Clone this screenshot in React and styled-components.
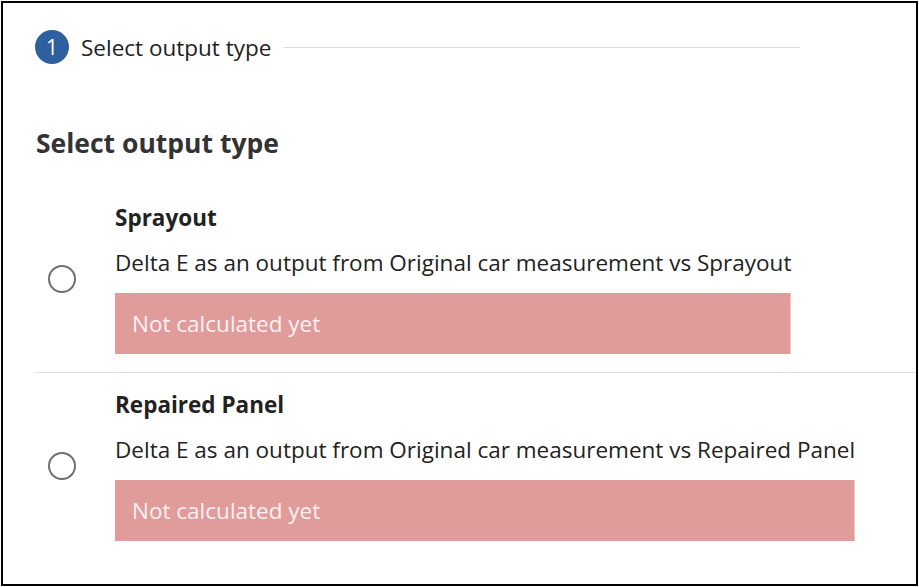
import React, { useState } from "react";
import styled, { createGlobalStyle } from "styled-components";

const GlobalStyle = createGlobalStyle`
  html, body {
    margin: 0;
    padding: 0;
    background: #ffffff;
  }
  body {
    font-family: "Open Sans", "Liberation Sans", sans-serif;
    color: #222222;
  }
`;

const Frame = styled.div`
  box-sizing: border-box;
  margin: 1px;
  height: 585px;
  border: 2px solid #000000;
  padding-left: 32px;
  overflow: hidden;
`;

const StepHeader = styled.div`
  display: flex;
  align-items: center;
  width: 765px;
  height: 34px;
  margin-top: 27px;
`;

const StepNumber = styled.div`
  width: 34px;
  height: 34px;
  border-radius: 50%;
  background: #2e5f9f;
  color: #ffffff;
  font-size: 21px;
  display: flex;
  align-items: center;
  justify-content: center;
  flex-shrink: 0;
`;

const StepLabel = styled.span`
  margin-left: 12px;
  font-size: 22.5px;
  color: #222222;
  white-space: nowrap;
`;

const StepLine = styled.div`
  flex: 1;
  height: 1px;
  margin-left: 12px;
  background: #e0e0e0;
`;

const Heading = styled.h2`
  margin: 63px 0 0 1px;
  font-size: 26.5px;
  line-height: 32px;
  font-weight: 700;
  color: #333333;
`;

const OptionList = styled.div`
  margin-top: 27px;
`;

const OptionRow = styled.label`
  display: flex;
  align-items: center;
  padding: 18px 0;
  border-bottom: ${(p) => (p.$last ? "none" : "1px solid #e3e3e3")};
  cursor: pointer;
`;

const RadioCell = styled.div`
  width: 80px;
  flex-shrink: 0;
  display: flex;
  padding-left: 13px;
  box-sizing: border-box;
`;

const Radio = styled.span`
  box-sizing: border-box;
  width: 28px;
  height: 28px;
  border-radius: 50%;
  border: 2px solid ${(p) => (p.$checked ? "#2e5f9f" : "#707070")};
  display: flex;
  align-items: center;
  justify-content: center;

  &::after {
    content: "";
    width: 14px;
    height: 14px;
    border-radius: 50%;
    background: #2e5f9f;
    display: ${(p) => (p.$checked ? "block" : "none")};
  }
`;

const OptionBody = styled.div`
  display: inline-flex;
  flex-direction: column;
`;

const OptionTitle = styled.div`
  font-size: 22.5px;
  line-height: 28px;
  font-weight: 700;
  color: #222222;
`;

const OptionText = styled.div`
  margin-top: 17px;
  font-size: 22.5px;
  line-height: 28px;
  color: #222222;
  white-space: nowrap;
`;

const StatusBox = styled.div`
  margin-top: 16px;
  height: 61px;
  padding-left: 17px;
  box-sizing: border-box;
  background: #e09b9b;
  border-right: 1px solid #f0c2c2;
  color: #fdf1f1;
  font-size: 22.5px;
  line-height: 61px;
`;

const options = [
  {
    id: "sprayout",
    title: "Sprayout",
    text: "Delta E as an output from Original car measurement vs Sprayout",
  },
  {
    id: "repaired",
    title: "Repaired Panel",
    text: "Delta E as an output from Original car measurement vs Repaired Panel",
  },
];

function App() {
  const [selected, setSelected] = useState(null);

  return (
    <>
      <GlobalStyle />
      <Frame>
        <StepHeader>
          <StepNumber>1</StepNumber>
          <StepLabel>Select output type</StepLabel>
          <StepLine />
        </StepHeader>
        <Heading>Select output type</Heading>
        <OptionList>
          {options.map((opt, i) => (
            <OptionRow
              key={opt.id}
              $last={i === options.length - 1}
              onClick={() => setSelected(opt.id)}
            >
              <RadioCell>
                <Radio $checked={selected === opt.id} />
              </RadioCell>
              <OptionBody>
                <OptionTitle>{opt.title}</OptionTitle>
                <OptionText>{opt.text}</OptionText>
                <StatusBox>Not calculated yet</StatusBox>
              </OptionBody>
            </OptionRow>
          ))}
        </OptionList>
      </Frame>
    </>
  );
}

export default App;
